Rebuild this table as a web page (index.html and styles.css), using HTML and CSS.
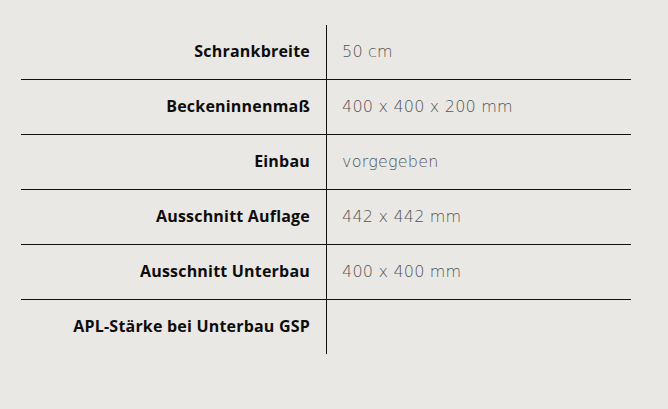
FILE: index.html
```html
<!DOCTYPE html>
<html lang="de">
<head>
<meta charset="utf-8">
<link rel="stylesheet" href="styles.css">
</head>
<body>
<div class="specs">
  <div class="row"><div class="label">Schrankbreite</div><div class="value">50 cm</div></div>
  <div class="row"><div class="label">Beckeninnenmaß</div><div class="value">400 x 400 x 200 mm</div></div>
  <div class="row"><div class="label">Einbau</div><div class="value">vorgegeben</div></div>
  <div class="row"><div class="label">Ausschnitt Auflage</div><div class="value">442 x 442 mm</div></div>
  <div class="row"><div class="label">Ausschnitt Unterbau</div><div class="value">400 x 400 mm</div></div>
  <div class="row"><div class="label">APL-Stärke bei Unterbau GSP</div><div class="value"></div></div>
</div>
</body>
</html>
```
FILE: styles.css
```css
html, body {
  margin: 0;
  padding: 0;
  background: #eae8e4;
}
body {
  padding: 25px 0 0 21px;
  font-family: "Open Sans", "Liberation Sans", sans-serif;
}
.specs {
  width: 610px;
}
.row {
  display: grid;
  grid-template-columns: 306px 304px;
  height: 54px;
  border-bottom: 1px solid #111;
}
.row:last-child {
  border-bottom: none;
}
.label {
  display: flex;
  align-items: center;
  justify-content: flex-end;
  padding-right: 16px;
  border-right: 1px solid #111;
  font-weight: 700;
  font-size: 16px;
  letter-spacing: 0.2px;
  color: #0d0d0d;
  padding-bottom: 2px;
}
.value {
  display: flex;
  align-items: center;
  padding-left: 15px;
  font-family: "DejaVu Sans", sans-serif;
  font-weight: 200;
  font-size: 16px;
  letter-spacing: 0.2px;
  color: #555;
  padding-bottom: 2px;
}
```
